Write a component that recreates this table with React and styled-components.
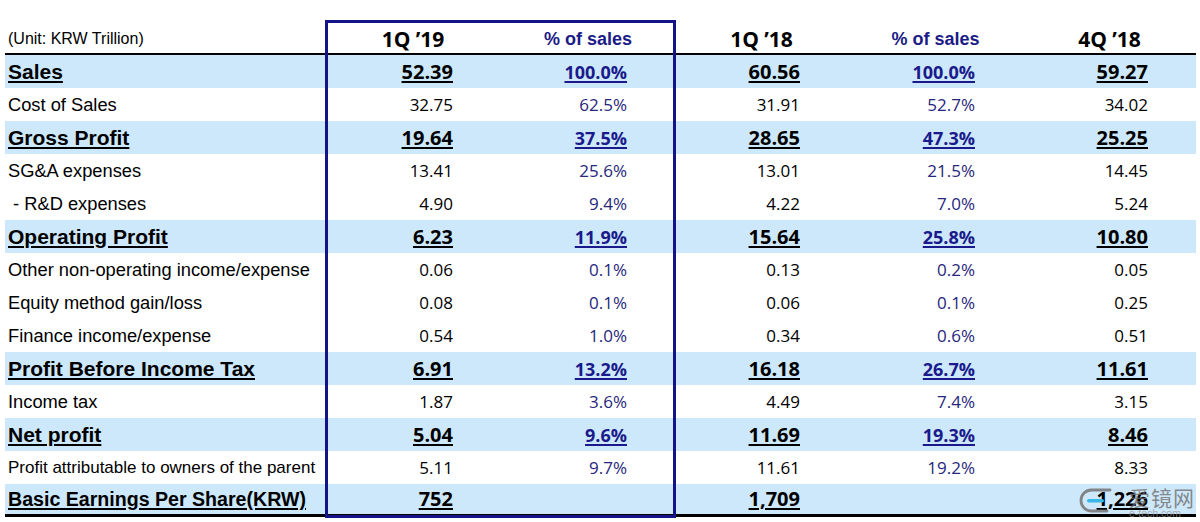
import React from "react";
import styled, { createGlobalStyle } from "styled-components";

const GlobalStyle = createGlobalStyle`
  html, body { margin: 0; padding: 0; background: #fff; }
  #root { width: 1200px; height: 522px; }
`;

const COLS = "320px 176px 174px 173px 175px 173px";
const NAVY = "#1c1c86";
const FRAME = "#14148a";
const ROWBLUE = "#cde8fa";

const Page = styled.div`
  position: relative;
  width: 1200px;
  height: 522px;
  padding-left: 5px;
  box-sizing: border-box;
  background: #fff;
  overflow: hidden;
`;

const Table = styled.div`
  position: relative;
  width: 1191px;
`;

const HeaderRow = styled.div`
  display: grid;
  grid-template-columns: ${COLS};
  height: 55px;
  box-sizing: border-box;
  border-bottom: 2px solid #000;
  align-items: end;
  padding-bottom: 2px;
`;

const UnitCell = styled.div`
  font-family: "Liberation Sans", Arial, sans-serif;
  font-size: 16px;
  line-height: 24px;
  color: #000;
  padding-left: 3px;
`;

const HeadCell = styled.div`
  text-align: center;
  line-height: 24px;
  font-family: ${(p) =>
    p.$pct ? '"Liberation Sans", Arial, sans-serif' : '"Open Sans", sans-serif'};
  font-weight: 700;
  font-size: ${(p) => (p.$pct ? "18px" : "21px")};
  color: ${(p) => (p.$pct ? NAVY : "#000")};
`;

const Row = styled.div`
  display: grid;
  grid-template-columns: ${COLS};
  height: 33px;
  box-sizing: border-box;
  align-items: center;
  background: ${(p) => (p.$hl ? ROWBLUE : "transparent")};
  border-bottom: ${(p) => (p.$last ? "3px solid #000" : "none")};
`;

const Label = styled.div`
  font-family: "Liberation Sans", Arial, sans-serif;
  font-size: ${(p) => p.$size};
  font-weight: ${(p) => (p.$bold ? 700 : 400)};
  color: #000;
  padding-left: 3px;
  white-space: pre;
  line-height: 24px;
  text-decoration: ${(p) => (p.$bold ? "underline" : "none")};
  text-decoration-thickness: 2px;
  text-underline-offset: 2px;
`;

const Value = styled.div`
  text-align: right;
  padding-right: 48px;
  font-family: "Open Sans", sans-serif;
  line-height: 24px;
  font-weight: ${(p) => (p.$bold ? 700 : 400)};
  font-size: ${(p) => (p.$bold ? (p.$pct ? "18px" : "20px") : "17px")};
  color: ${(p) => (p.$pct ? (p.$bold ? "#1a1a8c" : "#26267c") : "#000")};
  text-decoration: ${(p) => (p.$bold ? "underline" : "none")};
  text-decoration-thickness: 2px;
  text-underline-offset: 2px;
`;

const Frame = styled.div`
  position: absolute;
  left: 320px;
  top: 20px;
  width: 351px;
  height: 498px;
  box-sizing: border-box;
  border: 3px solid ${FRAME};
  pointer-events: none;
`;

const Watermark = styled.div`
  position: absolute;
  left: 1079px;
  top: 487px;
  display: flex;
  align-items: flex-start;
  gap: 16px;
  pointer-events: none;
`;

const MarkText = styled.div`
  display: flex;
  flex-direction: column;
  align-items: flex-start;
`;

const MarkCn = styled.span`
  font-family: "Noto Sans CJK SC", sans-serif;
  font-size: 21px;
  line-height: 21px;
  color: rgba(110, 110, 110, 0.8);
  letter-spacing: 1px;
`;

const MarkEn = styled.span`
  font-family: "Liberation Sans", Arial, sans-serif;
  font-size: 10.5px;
  line-height: 10px;
  color: rgba(150, 150, 150, 0.75);
`;

const rows = [
  { label: "Sales", bold: true, v: ["52.39", "100.0%", "60.56", "100.0%", "59.27"] },
  { label: "Cost of Sales", v: ["32.75", "62.5%", "31.91", "52.7%", "34.02"] },
  { label: "Gross Profit", bold: true, v: ["19.64", "37.5%", "28.65", "47.3%", "25.25"] },
  { label: "SG&A expenses", v: ["13.41", "25.6%", "13.01", "21.5%", "14.45"] },
  { label: " - R&D expenses", v: ["4.90", "9.4%", "4.22", "7.0%", "5.24"] },
  { label: "Operating Profit", bold: true, v: ["6.23", "11.9%", "15.64", "25.8%", "10.80"] },
  { label: "Other non-operating income/expense", v: ["0.06", "0.1%", "0.13", "0.2%", "0.05"] },
  { label: "Equity method gain/loss", v: ["0.08", "0.1%", "0.06", "0.1%", "0.25"] },
  { label: "Finance income/expense", v: ["0.54", "1.0%", "0.34", "0.6%", "0.51"] },
  { label: "Profit Before Income Tax", bold: true, v: ["6.91", "13.2%", "16.18", "26.7%", "11.61"] },
  { label: "Income tax", v: ["1.87", "3.6%", "4.49", "7.4%", "3.15"] },
  { label: "Net profit", bold: true, v: ["5.04", "9.6%", "11.69", "19.3%", "8.46"] },
  { label: "Profit attributable to owners of the parent", size: "17px", v: ["5.11", "9.7%", "11.61", "19.2%", "8.33"] },
  { label: "Basic Earnings Per Share(KRW)", bold: true, size: "19.6px", v: ["752", "", "1,709", "", "1,226"] },
];

const heads = [
  { t: "1Q \u201919" },
  { t: "% of sales", pct: true },
  { t: "1Q \u201918" },
  { t: "% of sales", pct: true },
  { t: "4Q \u201918" },
];

function LogoMark() {
  return (
    <svg width="34" height="27" viewBox="0 0 34 27">
      <path
        d="M31 3 H12.5 A10.5 10.5 0 0 0 12.5 24 H28"
        fill="none"
        stroke="rgba(115,115,115,0.85)"
        strokeWidth="2.8"
        strokeLinecap="round"
      />
      <rect x="8" y="12" width="17" height="3.6" rx="1.8" fill="#38b6e8" />
    </svg>
  );
}

export default function App() {
  return (
    <>
      <GlobalStyle />
      <Page>
        <Table>
          <HeaderRow>
            <UnitCell>(Unit: KRW Trillion)</UnitCell>
            {heads.map((h, i) => (
              <HeadCell key={i} $pct={h.pct}>
                {h.t}
              </HeadCell>
            ))}
          </HeaderRow>
          {rows.map((r, i) => (
            <Row key={i} $hl={r.bold} $last={i === rows.length - 1}>
              <Label $bold={r.bold} $size={r.size || (r.bold ? "21px" : "18.3px")}>
                {r.label}
              </Label>
              {r.v.map((v, j) => (
                <Value key={j} $bold={r.bold} $pct={j % 2 === 1}>
                  {v}
                </Value>
              ))}
            </Row>
          ))}
          <Frame />
        </Table>
        <Watermark>
          <LogoMark />
          <MarkText>
            <MarkCn>爱镜网</MarkCn>
            <MarkEn>e-tech.com</MarkEn>
          </MarkText>
        </Watermark>
      </Page>
    </>
  );
}
